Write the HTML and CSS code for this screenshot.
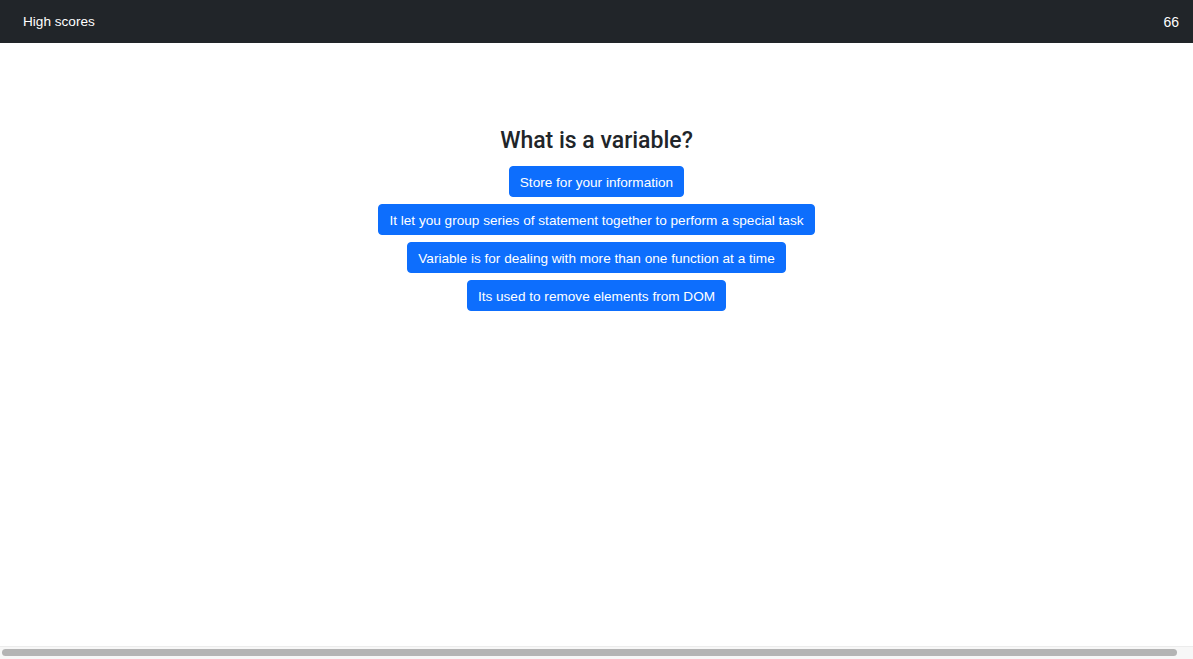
FILE: index.html
```html
<!DOCTYPE html>
<html lang="en">
<head>
<meta charset="utf-8">
<title>Quiz</title>
<link rel="stylesheet" href="styles.css">
</head>
<body>
<nav class="navbar">
  <a class="nav-link" href="#">High scores</a>
  <span class="score">66</span>
</nav>
<main class="quiz">
  <h2 class="question">What is a variable?</h2>
  <div class="answers">
    <button class="btn">Store for your information</button>
    <button class="btn">It let you group series of statement together to perform a special task</button>
    <button class="btn">Variable is for dealing with more than one function at a time</button>
    <button class="btn">Its used to remove elements from DOM</button>
  </div>
</main>
<div class="hscroll"><div class="hscroll-thumb"></div></div>
</body>
</html>
```
FILE: styles.css
```css
* { box-sizing: border-box; }
html, body { margin: 0; padding: 0; height: 100%; }
body {
  font-family: "Liberation Sans", Arial, Helvetica, sans-serif;
  color: #212529;
  background: #fff;
  overflow: hidden;
}
.navbar {
  height: 43px;
  background: #212529;
  display: flex;
  align-items: center;
  justify-content: space-between;
  padding: 0 14px 0 23px;
}
.nav-link {
  color: #fff;
  text-decoration: none;
  font-size: 13.6px;
}
.score {
  color: #fff;
  font-size: 14px;
}
.quiz {
  display: flex;
  flex-direction: column;
  align-items: center;
  padding-top: 84px;
}
.question {
  margin: 0 0 11px;
  font-family: Roboto, "Liberation Sans", Arial, sans-serif;
  font-size: 23px;
  font-weight: 500;
  line-height: 28px;
  color: #212529;
}
.answers {
  display: flex;
  flex-direction: column;
  align-items: center;
  gap: 7px;
}
.btn {
  font-family: inherit;
  font-size: 13.6px;
  line-height: 19px;
  height: 31px;
  padding: 6px 10px;
  color: #fff;
  background: #0d6efd;
  border: 1px solid #0d6efd;
  border-radius: 4px;
  cursor: pointer;
}
.hscroll {
  position: fixed;
  left: 0;
  right: 0;
  bottom: 0;
  height: 13px;
  background: #f7f7f7;
  border-top: 1px solid #ececec;
  padding: 2px 16px 2px 2px;
}
.hscroll-thumb {
  height: 7px;
  background: #b4b4b4;
  border-radius: 4px;
}
```
